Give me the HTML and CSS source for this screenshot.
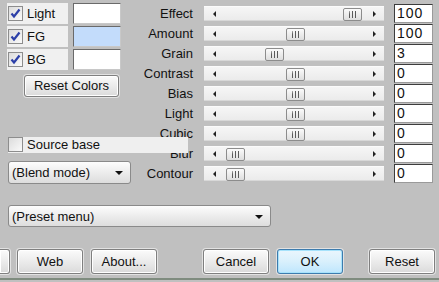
FILE: index.html
```html
<!DOCTYPE html>
<html lang="en">
<head>
    <meta charset="UTF-8">
    <title>Filter Settings</title>
    <link rel="stylesheet" href="styles.css">
</head>
<body>
    <div class="top">
        <div class="left-panel">
            <div class="color-row">
                <label class="check-box"><span class="check on"><svg width="13" height="13" viewBox="0 0 13 13"><path d="M2.5 6.5 L5 9.5 L10.5 2.5" fill="none" stroke="#2c3fa8" stroke-width="2.2"/></svg></span>Light</label>
                <span class="swatch"></span>
            </div>
            <div class="color-row">
                <label class="check-box"><span class="check on"><svg width="13" height="13" viewBox="0 0 13 13"><path d="M2.5 6.5 L5 9.5 L10.5 2.5" fill="none" stroke="#2c3fa8" stroke-width="2.2"/></svg></span>FG</label>
                <span class="swatch fg"></span>
            </div>
            <div class="color-row">
                <label class="check-box"><span class="check on"><svg width="13" height="13" viewBox="0 0 13 13"><path d="M2.5 6.5 L5 9.5 L10.5 2.5" fill="none" stroke="#2c3fa8" stroke-width="2.2"/></svg></span>BG</label>
                <span class="swatch"></span>
            </div>
            <button class="btn reset-colors">Reset Colors</button>

            <label class="source-base"><span class="check"></span>Source base</label>

            <div class="select blend">(Blend mode)<span class="arrow-down"></span></div>
        </div>

        <div class="sliders">
            <span class="s-label">Effect</span>
            <div class="track"><span class="arr-l"></span><span class="thumb" style="left: 139px"></span><span class="arr-r"></span></div>
            <span class="value">100</span>

            <span class="s-label">Amount</span>
            <div class="track"><span class="arr-l"></span><span class="thumb" style="left: 82px"></span><span class="arr-r"></span></div>
            <span class="value">100</span>

            <span class="s-label">Grain</span>
            <div class="track"><span class="arr-l"></span><span class="thumb" style="left: 61px"></span><span class="arr-r"></span></div>
            <span class="value">3</span>

            <span class="s-label">Contrast</span>
            <div class="track"><span class="arr-l"></span><span class="thumb" style="left: 82px"></span><span class="arr-r"></span></div>
            <span class="value">0</span>

            <span class="s-label">Bias</span>
            <div class="track"><span class="arr-l"></span><span class="thumb" style="left: 82px"></span><span class="arr-r"></span></div>
            <span class="value">0</span>

            <span class="s-label">Light</span>
            <div class="track"><span class="arr-l"></span><span class="thumb" style="left: 82px"></span><span class="arr-r"></span></div>
            <span class="value">0</span>

            <span class="s-label">Cubic</span>
            <div class="track"><span class="arr-l"></span><span class="thumb" style="left: 82px"></span><span class="arr-r"></span></div>
            <span class="value">0</span>

            <span class="s-label">Blur</span>
            <div class="track"><span class="arr-l"></span><span class="thumb" style="left: 22px"></span><span class="arr-r"></span></div>
            <span class="value">0</span>

            <span class="s-label">Contour</span>
            <div class="track"><span class="arr-l"></span><span class="thumb" style="left: 22px"></span><span class="arr-r"></span></div>
            <span class="value">0</span>
        </div>
    </div>

    <div class="select preset">(Preset menu)<span class="arrow-down"></span></div>

    <div class="button-row">
        <div class="group">
            <span class="btn edge"></span>
            <button class="btn">Web</button>
            <button class="btn">About...</button>
        </div>
        <div class="group middle">
            <button class="btn">Cancel</button>
            <button class="btn ok">OK</button>
        </div>
        <button class="btn last">Reset</button>
    </div>

    <div class="bottom-line"></div>
</body>
</html>
```

FILE: styles.css
```css
body {
    margin: 0;
    width: 439px;
    height: 282px;
    overflow: hidden;
    background-color: #c0c0c0;
    font-family: "Liberation Sans", Arial, sans-serif;
    font-size: 13px;
    color: #111;
}
.top {
    display: flex;
    height: 184px;
}
.left-panel {
    width: 129px;
    padding: 3px 0 0 7px;
    display: flex;
    flex-direction: column;
}
.color-row {
    display: flex;
    gap: 5px;
    height: 21px;
    margin-bottom: 2px;
}
.check-box {
    width: 61px;
    background-color: #f0f0f0;
    display: flex;
    align-items: center;
    gap: 4px;
    padding-left: 1px;
    box-sizing: border-box;
}
.check {
    width: 13px;
    height: 13px;
    border: 1px solid #8d8d8d;
    background: linear-gradient(135deg, #dcdcdc, #fafafa);
    display: inline-block;
    flex-shrink: 0;
}
.check svg {
    display: block;
}
.swatch {
    width: 46px;
    height: 19px;
    background-color: #fff;
    border: 1px solid #c8c8c8;
    border-top-color: #6a6a6a;
    border-left-color: #6a6a6a;
}
.swatch.fg {
    background-color: #c3dcfb;
}
.btn {
    font-family: "Liberation Sans", Arial, sans-serif;
    font-size: 13px;
    color: #111;
    width: 66px;
    height: 25px;
    padding: 0;
    border: 1px solid #7f7f7f;
    border-radius: 3px;
    background: linear-gradient(#fbfbfb, #e8e8e8 60%, #dadada);
    box-shadow: inset 0 0 0 1px #fff, 0 0 0 1px #e2e2e2;
}
.reset-colors {
    width: 95px;
    height: 22px;
    margin: 3px 0 0 17px;
}
.source-base {
    position: relative;
    z-index: 1;
    width: 180px;
    height: 17px;
    margin: 40px 0 0 1px;
    background-color: #efefef;
    display: flex;
    align-items: center;
    gap: 4px;
}
.select {
    position: relative;
    height: 22px;
    box-sizing: border-box;
    border: 1px solid #8a8a8a;
    border-radius: 3px;
    background: linear-gradient(#fdfdfd, #e6e6e6 70%, #dddddd);
    padding: 3px 0 0 3px;
    font-size: 13px;
}
.blend {
    width: 123px;
    height: 23px;
    margin: 8px 0 0 1px;
}
.preset {
    width: 263px;
    margin: 21px 0 0 8px;
}
.arrow-down {
    position: absolute;
    right: 7px;
    top: 9px;
    border-left: 4px solid transparent;
    border-right: 4px solid transparent;
    border-top: 4px solid #111;
}
.sliders {
    display: grid;
    grid-template-columns: 58px 180px 39px;
    grid-auto-rows: 20px;
    column-gap: 10px;
    padding-top: 4px;
}
.s-label {
    text-align: right;
    line-height: 20px;
    padding-right: 1px;
}
.track {
    position: relative;
    margin-top: 2px;
    height: 15px;
    background: linear-gradient(#f6f6f6, #ebebeb);
    border-top: 1px solid #fbfbfb;
    border-bottom: 1px solid #d8d8d8;
    box-sizing: border-box;
}
.arr-l, .arr-r {
    position: absolute;
    top: 4px;
    border-top: 3px solid transparent;
    border-bottom: 3px solid transparent;
}
.arr-l {
    left: 9px;
    border-right: 3px solid #222;
}
.arr-r {
    right: 8px;
    border-left: 3px solid #222;
}
.thumb {
    position: absolute;
    top: 1px;
    width: 17px;
    height: 11px;
    border: 1px solid #8c8c8c;
    border-radius: 2px;
    background: linear-gradient(#fafafa, #dedede);
}
.thumb::after {
    content: "";
    position: absolute;
    left: 5px;
    top: 2px;
    width: 8px;
    height: 7px;
    background: repeating-linear-gradient(90deg, #5a5a5a 0 1px, transparent 1px 3px);
    transform: skewX(-8deg);
}
.value {
    height: 19px;
    box-sizing: border-box;
    background-color: #fff;
    border: 1px solid #3c3c3c;
    border-right-color: #9a9a9a;
    border-bottom-color: #9a9a9a;
    font-size: 14px;
    line-height: 17px;
    padding-left: 2px;
    letter-spacing: 1px;
}
.button-row {
    display: flex;
    margin-top: 22px;
}
.group {
    display: flex;
    gap: 8px;
}
.btn.edge {
    width: 10px;
    border-left: none;
    border-radius: 0 3px 3px 0;
    margin-right: -1px;
    box-sizing: border-box;
}
.middle {
    margin-left: 46px;
}
.last {
    margin-left: 26px;
}
.btn.ok {
    border-color: #3d7bad;
    background: linear-gradient(#eaf6fd, #d9f0fc 50%, #bee6fd);
    box-shadow: inset 0 0 0 1px #a6e2fb, 0 0 0 1px #e2e2e2;
}
.bottom-line {
    margin-top: 4px;
    height: 2px;
    background-color: #7f8c7f;
}
```
